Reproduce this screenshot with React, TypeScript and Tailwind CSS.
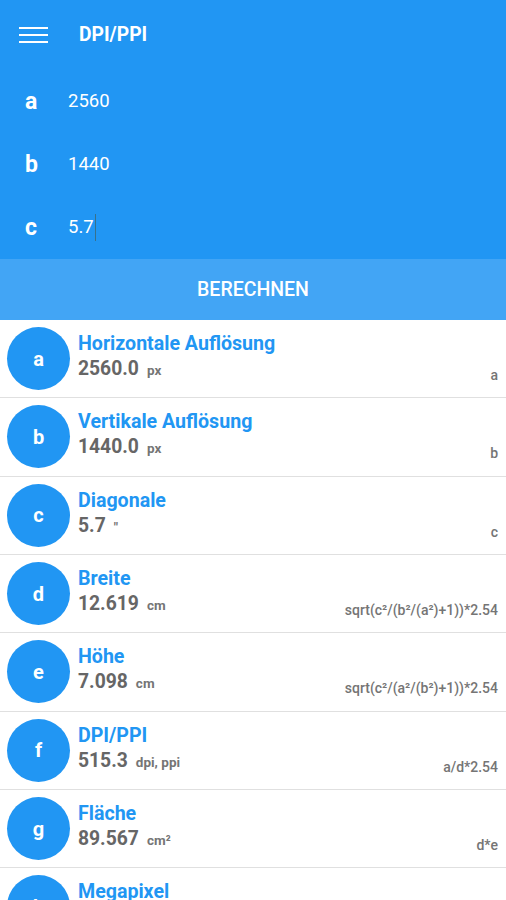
import React from "react";

const inputs = [
  { key: "a", value: "2560" },
  { key: "b", value: "1440" },
  { key: "c", value: "5.7", cursor: true },
];

const results = [
  { key: "a", title: "Horizontale Auflösung", value: "2560.0", unit: "px", formula: "a" },
  { key: "b", title: "Vertikale Auflösung", value: "1440.0", unit: "px", formula: "b" },
  { key: "c", title: "Diagonale", value: "5.7", unit: "\"", formula: "c" },
  { key: "d", title: "Breite", value: "12.619", unit: "cm", formula: "sqrt(c²/(b²/(a²)+1))*2.54" },
  { key: "e", title: "Höhe", value: "7.098", unit: "cm", formula: "sqrt(c²/(a²/(b²)+1))*2.54" },
  { key: "f", title: "DPI/PPI", value: "515.3", unit: "dpi, ppi", formula: "a/d*2.54" },
  { key: "g", title: "Fläche", value: "89.567", unit: "cm²", formula: "d*e" },
  { key: "h", title: "Megapixel", value: "3.686", unit: "MP", formula: "a*b/1000000" },
];

const App = () => {
  return (
    <div className="h-[900px] overflow-hidden bg-white font-['Roboto',sans-serif]">
      <div className="bg-[#2196f3] text-white">
        <div className="flex h-[70px] items-center">
          <div className="ml-[19px] flex w-[29px] flex-col gap-[4.5px]">
            <span className="h-[2.5px] bg-white" />
            <span className="h-[2.5px] bg-white" />
            <span className="h-[2.5px] bg-white" />
          </div>
          <span className="ml-[31px] text-[19.3px] font-bold">DPI/PPI</span>
        </div>
        {inputs.map((i) => (
          <div key={i.key} className="flex h-[63px] items-center">
            <span className="ml-[25px] w-[43px] text-[23px] font-bold leading-none">{i.key}</span>
            <span className="text-[18.5px] leading-none">{i.value}</span>
            {i.cursor && <span className="ml-[1px] h-[27px] w-[1.5px] bg-[#37718c]" />}
          </div>
        ))}
      </div>
      <div className="flex h-[61px] items-center justify-center bg-[#42a5f5] text-[19.5px] font-medium text-white">
        BERECHNEN
      </div>
      {results.map((r) => (
        <div key={r.key} className="flex h-[78.33px] items-center border-b border-[#e0e0e0] pl-[7px] pr-[8px]">
          <div className="flex h-[63px] w-[63px] shrink-0 items-center justify-center rounded-full bg-[#2196f3] text-[20px] font-bold text-white">
            {r.key}
          </div>
          <div className="ml-[8px] flex flex-1 flex-col self-stretch pt-[11px]">
            <span className="text-[19.6px] font-bold leading-[25px] text-[#2196f3]">{r.title}</span>
            <div className="flex items-end">
              <div className="flex items-baseline">
                <span className="text-[19.3px] font-bold leading-[26px] text-[#666666]">{r.value}</span>
                <span className="ml-[8px] text-[13.5px] font-bold text-[#757575]">{r.unit}</span>
              </div>
              <span className="mb-[-4px] ml-auto text-[14px] font-medium text-[#757575]">{r.formula}</span>
            </div>
          </div>
        </div>
      ))}
    </div>
  );
};

export default App;
